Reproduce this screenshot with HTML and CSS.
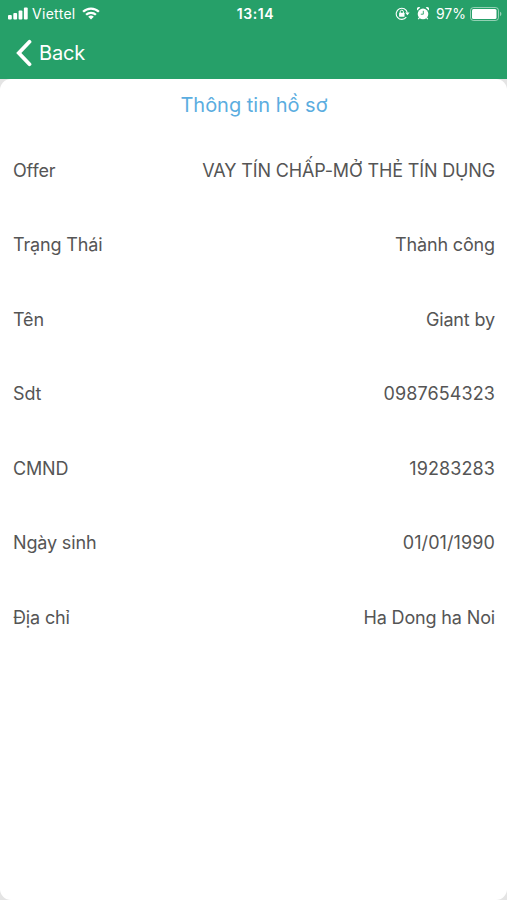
FILE: index.html
```html
<!DOCTYPE html>
<html lang="vi">
<head>
    <meta charset="UTF-8">
    <meta name="viewport" content="width=device-width, initial-scale=1.0">
    <title>Thông tin hồ sơ</title>
    <link rel="stylesheet" href="styles.css">
</head>
<body>
    <header class="header">
        <div class="status">
            <div class="status-left">
                <svg class="signal" width="20" height="13" viewBox="0 0 20 13" fill="#fff">
                    <rect x="0" y="8" width="3.8" height="4.5" rx="1"/>
                    <rect x="5.3" y="6" width="3.8" height="6.5" rx="1"/>
                    <rect x="10.6" y="3.5" width="3.8" height="9" rx="1"/>
                    <rect x="15.9" y="0.5" width="3.8" height="12" rx="1"/>
                </svg>
                <span class="carrier">Viettel</span>
                <svg class="wifi" width="18" height="13" viewBox="0 0 18 13">
                    <path d="M1.1 4.8a11.2 11.2 0 0 1 15.8 0M4.1 7.8a7 7 0 0 1 9.8 0" fill="none" stroke="#fff" stroke-width="2.3"/>
                    <path d="M9 12.6L6.2 9.8a4 4 0 0 1 5.6 0z" fill="#fff"/>
                </svg>
            </div>
            <span class="clock">13:14</span>
            <div class="status-right">
                <svg class="lock" width="15" height="13" viewBox="0 0 15 13">
                    <path d="M11.3 10.2A5.6 5.6 0 1 1 12.3 5.6" fill="none" stroke="#fff" stroke-width="1.1"/>
                    <path d="M10.2 5.4h4.4l-2.2 2.8z" fill="#fff"/>
                    <rect x="4.1" y="5.7" width="5.4" height="4" rx=".5" fill="#fff"/>
                    <path d="M5.2 6V4.8a1.6 1.6 0 0 1 3.2 0V6" fill="none" stroke="#fff"/>
                </svg>
                <svg class="alarm" width="12" height="13" viewBox="0 0 12 13">
                    <path d="M.2 3.4A2.1 2.1 0 0 1 3.3.6zM11.8 3.4A2.1 2.1 0 0 0 8.7.6z" fill="#fff"/>
                    <circle cx="6" cy="6.9" r="5.3" fill="#fff"/>
                    <path d="M2.5 10.5l-1.2 1.7M9.5 10.5l1.2 1.7" stroke="#fff" stroke-width="1.3"/>
                    <path d="M6.3 3.8v3.4H3.8" fill="none" stroke="#26a069" stroke-width=".9"/>
                </svg>
                <span class="percent">97%</span>
                <svg class="battery" width="32" height="14" viewBox="0 0 32 14">
                    <rect x=".5" y=".5" width="28" height="13" rx="3" fill="none" stroke="#fff" stroke-opacity=".5"/>
                    <rect x="2" y="2" width="24.5" height="10" rx="1.5" fill="#fff"/>
                    <path d="M30 4.8a2.4 2.4 0 0 1 0 4.4z" fill="#fff" fill-opacity=".5"/>
                </svg>
            </div>
        </div>
        <a class="back">
            <svg width="17" height="28" viewBox="0 0 17 28">
                <path d="M14.5 2.8L3.8 14L14.5 25.2" fill="none" stroke="#fff" stroke-width="3.8" stroke-linecap="round"/>
            </svg>
            <span>Back</span>
        </a>
    </header>
    <main class="card">
        <h1 class="title">Thông tin hồ sơ</h1>
        <div class="row">
            <span>Offer</span>
            <span>VAY TÍN CHẤP-MỞ THẺ TÍN DỤNG</span>
        </div>
        <div class="row">
            <span>Trạng Thái</span>
            <span>Thành công</span>
        </div>
        <div class="row">
            <span>Tên</span>
            <span>Giant by</span>
        </div>
        <div class="row">
            <span>Sdt</span>
            <span class="number">0987654323</span>
        </div>
        <div class="row">
            <span>CMND</span>
            <span class="number">19283283</span>
        </div>
        <div class="row">
            <span>Ngày sinh</span>
            <span class="number">01/01/1990</span>
        </div>
        <div class="row">
            <span>Địa chỉ</span>
            <span>Ha Dong ha Noi</span>
        </div>
    </main>
</body>
</html>
```
FILE: styles.css
```css
* {
    box-sizing: border-box;
}

body {
    margin: 0;
    height: 100vh;
    display: flex;
    flex-direction: column;
    overflow: hidden;
    background-color: #e4e4e4;
    font-family: Inter, "Liberation Sans", sans-serif;
    color: #555;
}

.header {
    height: 79px;
    background-color: #26a069;
    color: white;
}

.status {
    height: 27px;
    padding: 0 5px 0 8px;
    display: grid;
    grid-template-columns: 1fr auto 1fr;
    align-items: center;
    font-size: 14px;
    line-height: 27px;
}

.status-left,
.status-right {
    display: flex;
    align-items: center;
}

.status-right {
    justify-content: flex-end;
}

.carrier {
    margin: 0 6px 0 4px;
    letter-spacing: 0.3px;
}

.clock {
    padding-left: 1px;
    font-weight: 600;
    letter-spacing: 0.6px;
}

.alarm {
    margin: 0 7px;
}

.percent {
    margin-right: 4px;
}

.back {
    height: 51px;
    padding-left: 15px;
    display: flex;
    align-items: center;
    gap: 7px;
    font-size: 20px;
    letter-spacing: -0.2px;
}

.card {
    flex: 1;
    padding: 0 12px 0 13px;
    background-color: white;
    border-radius: 11px;
}

.title {
    margin: 0;
    height: 54px;
    font-size: 20px;
    font-weight: 400;
    line-height: 52px;
    text-align: center;
    color: #5bade0;
}

.row {
    height: 74.5px;
    display: flex;
    justify-content: space-between;
    align-items: center;
    font-size: 18px;
    letter-spacing: -0.15px;
}

.number {
    letter-spacing: 0.1px;
}
```
